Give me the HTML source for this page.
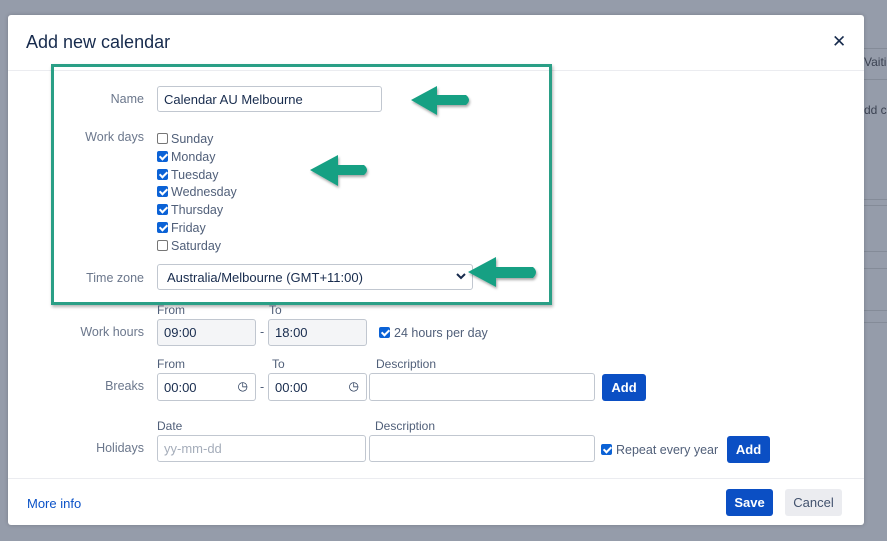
<!DOCTYPE html>
<html><head><meta charset="utf-8"><style>
*{box-sizing:border-box;margin:0;padding:0}
body{width:887px;height:541px;background:#959caa;position:relative;overflow:hidden;font-family:"Liberation Sans",sans-serif;color:#172b4d}
.a{position:absolute}
.modal{left:8px;top:15px;width:856px;height:510px;background:#fff;border-radius:3px;box-shadow:0 0 4px rgba(0,0,0,.2)}
.lbl{font-size:12.5px;color:#6b778c;text-align:right;width:100px}
.inp{border:1px solid #c1c7d0;border-radius:3px;background:#fff;font-size:13px;color:#172b4d;padding-left:6px;display:flex;align-items:center}
.gr{background:#f4f5f7}
.sm{font-size:12.5px;color:#505f79}
.cb{width:11px;height:11px;border-radius:2px;border:1px solid #767676;background:#fff}
.cb.on{background:#0b62d6;border-color:#0b62d6}
.cb.on::after{content:"";position:absolute;left:3px;top:0px;width:3px;height:6px;border:solid #fff;border-width:0 2px 2px 0;transform:rotate(45deg)}
.btn{background:#0b4fc4;color:#fff;font-weight:bold;font-size:13px;border-radius:3px;display:flex;align-items:center;justify-content:center}
.line{background:#848b98;height:1px}
</style></head><body>
<div class="a line" style="left:864px;top:48px;width:23px"></div>
<div class="a line" style="left:864px;top:79px;width:23px"></div>
<div class="a sm" style="left:864px;top:55px;color:#3b4252;font-size:12px">Vaitin</div>
<div class="a sm" style="left:864px;top:103px;color:#3b4252;font-size:12px">dd c</div>
<div class="a line" style="left:864px;top:199px;width:23px"></div>
<div class="a line" style="left:864px;top:205px;width:23px"></div>
<div class="a line" style="left:864px;top:251px;width:23px"></div>
<div class="a line" style="left:864px;top:268px;width:23px"></div>
<div class="a line" style="left:864px;top:310px;width:23px"></div>
<div class="a line" style="left:864px;top:322px;width:23px"></div>

<div class="a modal"></div>
<div class="a" style="left:26px;top:32px;font-size:18px;color:#172b4d">Add new calendar</div>
<div class="a" style="left:832px;top:32px;font-size:17px;color:#172b4d">✕</div>
<div class="a" style="left:8px;top:70px;width:856px;height:1px;background:#ebecf0"></div>
<div class="a" style="left:8px;top:478px;width:856px;height:1px;background:#ebecf0"></div>

<div class="a" style="left:51px;top:64px;width:501px;height:241px;border:3px solid #2a9f86;box-shadow:1px 2px 3px rgba(0,0,0,.3)"></div>

<div class="a lbl" style="left:44px;top:92px">Name</div>
<div class="a inp" style="left:157px;top:86px;width:225px;height:26px">Calendar AU Melbourne</div>

<div class="a lbl" style="left:44px;top:130px">Work days</div>
<div class="a" style="left:157px;top:132px">
 <div style="position:relative;height:17.8px"><div class="a cb" style="left:0;top:1px"></div><span class="a sm" style="left:14px;top:0">Sunday</span></div>
 <div style="position:relative;height:17.8px"><div class="a cb on" style="left:0;top:1px"></div><span class="a sm" style="left:14px;top:0">Monday</span></div>
 <div style="position:relative;height:17.8px"><div class="a cb on" style="left:0;top:1px"></div><span class="a sm" style="left:14px;top:0">Tuesday</span></div>
 <div style="position:relative;height:17.8px"><div class="a cb on" style="left:0;top:1px"></div><span class="a sm" style="left:14px;top:0">Wednesday</span></div>
 <div style="position:relative;height:17.8px"><div class="a cb on" style="left:0;top:1px"></div><span class="a sm" style="left:14px;top:0">Thursday</span></div>
 <div style="position:relative;height:17.8px"><div class="a cb on" style="left:0;top:1px"></div><span class="a sm" style="left:14px;top:0">Friday</span></div>
 <div style="position:relative;height:17.8px"><div class="a cb" style="left:0;top:1px"></div><span class="a sm" style="left:14px;top:0">Saturday</span></div>
</div>

<div class="a lbl" style="left:44px;top:271px">Time zone</div>
<div class="a inp" style="left:157px;top:264px;width:316px;height:26px;padding-left:9px">Australia/Melbourne (GMT+11:00)</div>
<svg class="a" style="left:456px;top:272px" width="10" height="8"><path d="M1 2 L5 6 L9 2" fill="none" stroke="#172b4d" stroke-width="2"/></svg>

<svg class="a" style="left:0;top:0" width="887" height="541">
<defs><filter id="s"><feDropShadow dx="1" dy="2" stdDeviation="1.2" flood-opacity=".35"/></filter></defs>
<g fill="#17a083" filter="url(#s)">
<path d="M411 100 L437 86 L437 95 L466 95 Q472 100 466 105 L437 105 L437 115 Z"/>
<path d="M310 170 L338 155 L338 165 L364 165 Q370 170 364 175 L338 175 L338 186 Z"/>
<path d="M468 272 L496 257 L496 267 L533 267 Q539 272 533 278 L496 278 L496 287 Z"/>
</g>
</svg>

<div class="a sm" style="left:157px;top:303px;font-size:12px">From</div>
<div class="a sm" style="left:269px;top:303px;font-size:12px">To</div>
<div class="a lbl" style="left:44px;top:325px">Work hours</div>
<div class="a inp gr" style="left:157px;top:319px;width:99px;height:27px">09:00</div>
<div class="a sm" style="left:260px;top:325px">-</div>
<div class="a inp gr" style="left:268px;top:319px;width:99px;height:27px">18:00</div>
<div class="a cb on" style="left:379px;top:327px"></div>
<div class="a sm" style="left:394px;top:326px">24 hours per day</div>

<div class="a sm" style="left:157px;top:357px;font-size:12px">From</div>
<div class="a sm" style="left:272px;top:357px;font-size:12px">To</div>
<div class="a sm" style="left:376px;top:357px;font-size:12px">Description</div>
<div class="a lbl" style="left:44px;top:379px">Breaks</div>
<div class="a inp" style="left:157px;top:373px;width:99px;height:28px">00:00<span style="position:absolute;right:7px;top:5px;font-size:12px">◷</span></div>
<div class="a sm" style="left:260px;top:380px">-</div>
<div class="a inp" style="left:268px;top:373px;width:99px;height:28px">00:00<span style="position:absolute;right:7px;top:5px;font-size:12px">◷</span></div>
<div class="a inp" style="left:369px;top:373px;width:226px;height:28px"></div>
<div class="a btn" style="left:602px;top:374px;width:44px;height:27px">Add</div>

<div class="a sm" style="left:157px;top:419px;font-size:12px">Date</div>
<div class="a sm" style="left:375px;top:419px;font-size:12px">Description</div>
<div class="a lbl" style="left:44px;top:441px">Holidays</div>
<div class="a inp" style="left:157px;top:435px;width:209px;height:27px;color:#a5adba">yy-mm-dd</div>
<div class="a inp" style="left:369px;top:435px;width:226px;height:27px"></div>
<div class="a cb on" style="left:601px;top:444px"></div>
<div class="a sm" style="left:616px;top:443px">Repeat every year</div>
<div class="a btn" style="left:727px;top:436px;width:43px;height:27px">Add</div>

<div class="a" style="left:27px;top:496px;font-size:13px;color:#0b52c7">More info</div>
<div class="a btn" style="left:726px;top:489px;width:47px;height:27px">Save</div>
<div class="a" style="left:785px;top:489px;width:57px;height:27px;background:#ebecf0;border-radius:3px;font-size:13px;color:#42526e;display:flex;align-items:center;justify-content:center">Cancel</div>
</body></html>
